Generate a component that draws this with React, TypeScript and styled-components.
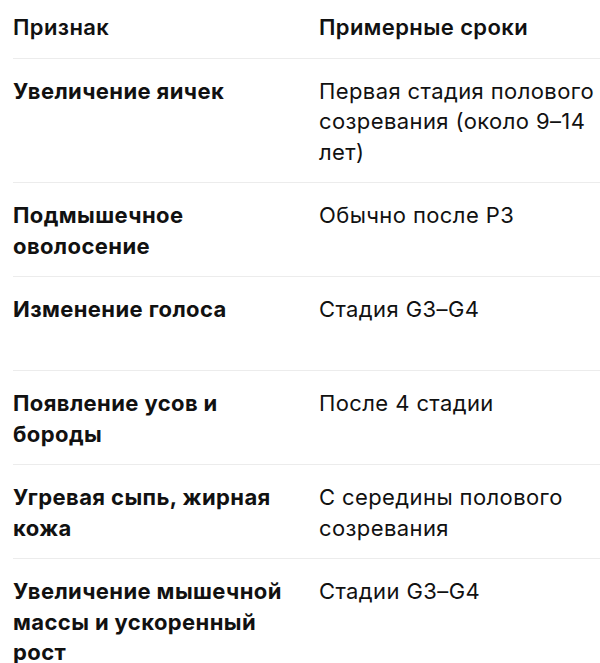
import React from 'react'
import styled, { createGlobalStyle } from 'styled-components'

const GlobalStyle = createGlobalStyle`
  html, body {
    margin: 0;
    padding: 0;
    background: #ffffff;
  }
  body {
    font-family: Inter, 'Noto Sans', 'Liberation Sans', sans-serif;
    color: #111111;
    -webkit-font-smoothing: antialiased;
  }
`

const Table = styled.div`
  margin-left: 13px;
  width: 587px;
  overflow: hidden;
`

const Row = styled.div<{ $head?: boolean }>`
  display: grid;
  grid-template-columns: 306px 1fr;
  padding: ${(p) => (p.$head ? '12px 0 15px' : '17px 0 15px')};
  border-bottom: 1px solid #ececec;
  font-size: 22px;
  line-height: 30.5px;
  letter-spacing: 0.4px;
`

const Label = styled.div<{ $head?: boolean }>`
  padding-right: 16px;
  font-weight: ${(p) => (p.$head ? 600 : 700)};
  min-height: ${(p) => (p.$head ? 'auto' : '61px')};
`

const Value = styled.div<{ $head?: boolean }>`
  font-weight: ${(p) => (p.$head ? 600 : 400)};
`

const rows = [
  ['Увеличение яичек', 'Первая стадия полового созревания (около 9–14 лет)'],
  ['Подмышечное оволосение', 'Обычно после P3'],
  ['Изменение голоса', 'Стадия G3–G4'],
  ['Появление усов и бороды', 'После 4 стадии'],
  ['Угревая сыпь, жирная кожа', 'С середины полового созревания'],
  ['Увеличение мышечной массы и ускоренный рост', 'Стадии G3–G4'],
]

const App = () => {
  return (
    <>
      <GlobalStyle />
      <Table>
        <Row $head>
          <Label $head>Признак</Label>
          <Value $head>Примерные сроки</Value>
        </Row>
        {rows.map(([label, value]) => (
          <Row key={label}>
            <Label>{label}</Label>
            <Value>{value}</Value>
          </Row>
        ))}
      </Table>
    </>
  )
}

export default App
